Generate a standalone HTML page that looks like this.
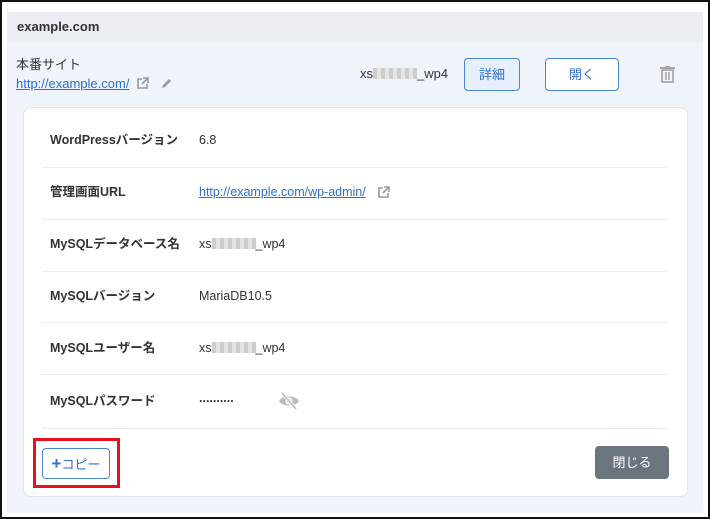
<!DOCTYPE html>
<html><head><meta charset="utf-8"><style>
*{box-sizing:border-box;margin:0;padding:0}
body{width:710px;height:519px;background:#fff;position:relative;overflow:hidden;font-family:"Liberation Sans","Noto Sans CJK JP",sans-serif;color:#333;font-size:13px}
.frame{position:absolute;left:0;top:0;width:710px;height:519px;border:2px solid #111}
.panel{position:absolute;left:7px;top:12px;width:696px;height:501px;background:#eff4fb}
.hdr{position:absolute;left:7px;top:12px;width:696px;height:30px;background:#eaeef3;font-weight:bold;font-size:13px;padding:7px 0 0 10px;color:#333}
.abs{position:absolute}
a{color:#2f6fcf;text-decoration:underline}
.card{position:absolute;left:23px;top:107px;width:665px;height:390px;background:#fff;border:1px solid #e1e5ea;border-radius:8px}
.sep{position:absolute;left:42px;width:626px;height:1px;background:#ebedf0}
.lbl{position:absolute;left:50px;font-weight:bold;font-size:12.5px;color:#333;line-height:16px}
.val{position:absolute;left:199px;font-size:12.5px;color:#333;line-height:16px}
.blur{display:inline-block;width:44px;height:11px;background:repeating-linear-gradient(90deg,#ccc 0 4px,#e3e3e3 4px 8px);vertical-align:-1px}
.btn{position:absolute;border:1px solid #4a86d8;border-radius:4px;color:#2f6fcf;text-align:center;font-size:13px}
</style></head><body>
<div class="frame"></div>
<div class="panel"></div>
<div class="hdr">example.com</div>
<div class="abs" style="left:16px;top:54px;font-size:13px">本番サイト</div>
<div class="abs" style="left:16px;top:76px;font-size:13px"><a>http://example.com/</a></div>
<svg class="abs" style="left:136px;top:77px" width="13" height="13" viewBox="0 0 13 13"><path d="M6 2H2v9h9V7" fill="none" stroke="#999" stroke-width="1.6"/><path d="M7 1h5v5M12 1L6 7" fill="none" stroke="#999" stroke-width="1.6"/></svg>
<svg class="abs" style="left:160px;top:77px" width="13" height="13" viewBox="0 0 13 13"><path d="M2 11l1-3 6-6 2 2-6 6z" fill="#999"/></svg>
<div class="abs" style="left:360px;top:66px;font-size:13px">xs<span class="blur"></span>_wp4</div>
<div class="btn" style="left:464px;top:58px;width:56px;height:33px;line-height:31px;background:#e6effb">詳細</div>
<div class="btn" style="left:545px;top:58px;width:74px;height:33px;line-height:31px;background:#fff">開く</div>
<svg class="abs" style="left:660px;top:66px" width="15" height="17" viewBox="0 0 15 17"><rect x="0" y="1" width="15" height="2" fill="#aaa"/><rect x="5" y="0" width="5" height="2" fill="#aaa"/><path d="M2 4h11v12H2z" fill="none" stroke="#aaa" stroke-width="1.8"/><path d="M6 6v8M9 6v8" stroke="#aaa" stroke-width="1.6"/></svg>
<div class="card"></div>
<div class="lbl" style="top:132px">WordPressバージョン</div><div class="val" style="top:132px">6.8</div>
<div class="sep" style="top:167px"></div>
<div class="lbl" style="top:184px">管理画面URL</div><div class="val" style="top:184px"><a>http://example.com/wp-admin/</a></div>
<svg class="abs" style="left:377px;top:186px" width="13" height="13" viewBox="0 0 13 13"><path d="M6 2H2v9h9V7" fill="none" stroke="#999" stroke-width="1.6"/><path d="M7 1h5v5M12 1L6 7" fill="none" stroke="#999" stroke-width="1.6"/></svg>
<div class="sep" style="top:219px"></div>
<div class="lbl" style="top:236px">MySQLデータベース名</div><div class="val" style="top:236px">xs<span class="blur"></span>_wp4</div>
<div class="sep" style="top:271px"></div>
<div class="lbl" style="top:288px">MySQLバージョン</div><div class="val" style="top:288px">MariaDB10.5</div>
<div class="sep" style="top:322px"></div>
<div class="lbl" style="top:340px">MySQLユーザー名</div><div class="val" style="top:340px">xs<span class="blur"></span>_wp4</div>
<div class="sep" style="top:374px"></div>
<div class="lbl" style="top:393px">MySQLパスワード</div><div class="val" style="top:390px;font-weight:bold;letter-spacing:0px">..........</div>
<svg class="abs" style="left:278px;top:392px" width="22" height="18" viewBox="0 0 22 18"><path d="M1 9C4 3 18 3 21 9C18 15 4 15 1 9z" fill="#bbb"/><circle cx="11" cy="9" r="3.5" fill="#fff"/><circle cx="11" cy="9" r="2" fill="#bbb"/><path d="M4 1l14 16" stroke="#fff" stroke-width="3"/><path d="M4 1l14 16" stroke="#bbb" stroke-width="1.6"/></svg>
<div class="sep" style="top:428px"></div>
<div class="abs" style="left:33px;top:438px;width:87px;height:50px;border:3px solid #e8101c"></div>
<div class="btn" style="left:42px;top:448px;width:68px;height:31px;line-height:29px;background:#fff;color:#2f6fcf"><b style="font-size:17px">+</b>コピー</div>
<div class="abs" style="left:595px;top:446px;width:74px;height:33px;background:#6c757d;border-radius:4px;color:#fff;text-align:center;line-height:33px;font-size:13px">閉じる</div>
</body></html>
